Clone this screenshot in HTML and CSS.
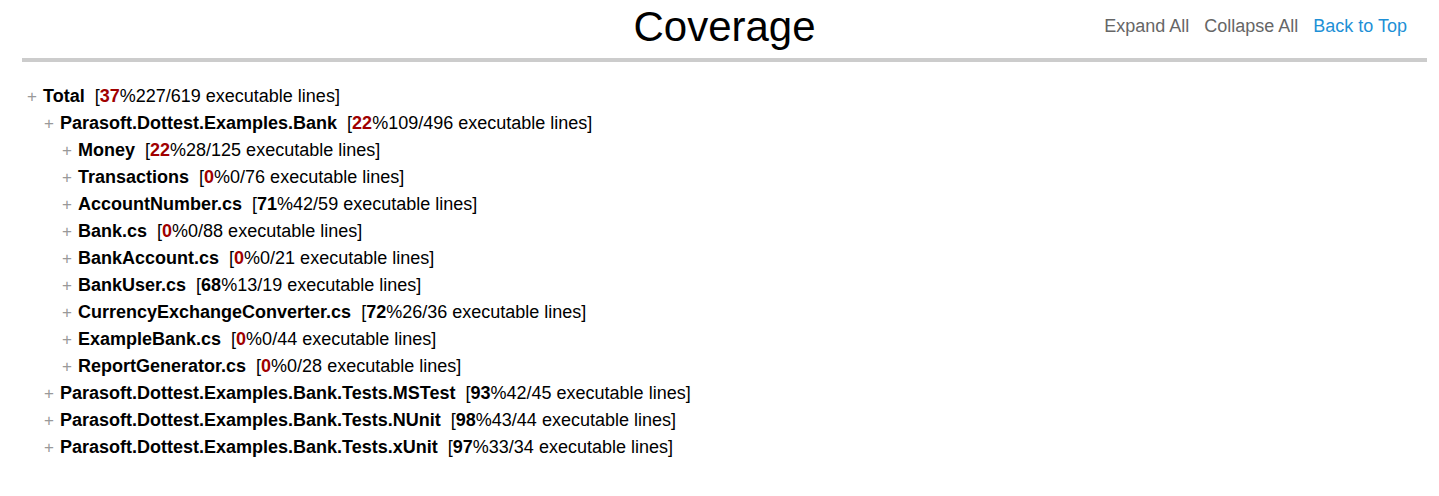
FILE: index.html
```html
<!DOCTYPE html>
<html>
<head>
<meta charset="utf-8">
<link rel="stylesheet" href="styles.css">
</head>
<body>
<div class="page">
  <header class="header">
    <h1 class="title">Coverage</h1>
    <nav class="links">
      <a class="link">Expand All</a>
      <a class="link">Collapse All</a>
      <a class="link top">Back to Top</a>
    </nav>
  </header>
  <ul class="tree">
    <li class="node l1"><span class="plus">+</span><b class="name">Total</b><span class="stat">[<b class="low">37</b>%227/619 executable lines]</span></li>
    <li class="node l2"><span class="plus">+</span><b class="name">Parasoft.Dottest.Examples.Bank</b><span class="stat">[<b class="low">22</b>%109/496 executable lines]</span></li>
    <li class="node l3"><span class="plus">+</span><b class="name">Money</b><span class="stat">[<b class="low">22</b>%28/125 executable lines]</span></li>
    <li class="node l3"><span class="plus">+</span><b class="name">Transactions</b><span class="stat">[<b class="low">0</b>%0/76 executable lines]</span></li>
    <li class="node l3"><span class="plus">+</span><b class="name">AccountNumber.cs</b><span class="stat">[<b>71</b>%42/59 executable lines]</span></li>
    <li class="node l3"><span class="plus">+</span><b class="name">Bank.cs</b><span class="stat">[<b class="low">0</b>%0/88 executable lines]</span></li>
    <li class="node l3"><span class="plus">+</span><b class="name">BankAccount.cs</b><span class="stat">[<b class="low">0</b>%0/21 executable lines]</span></li>
    <li class="node l3"><span class="plus">+</span><b class="name">BankUser.cs</b><span class="stat">[<b>68</b>%13/19 executable lines]</span></li>
    <li class="node l3"><span class="plus">+</span><b class="name">CurrencyExchangeConverter.cs</b><span class="stat">[<b>72</b>%26/36 executable lines]</span></li>
    <li class="node l3"><span class="plus">+</span><b class="name">ExampleBank.cs</b><span class="stat">[<b class="low">0</b>%0/44 executable lines]</span></li>
    <li class="node l3"><span class="plus">+</span><b class="name">ReportGenerator.cs</b><span class="stat">[<b class="low">0</b>%0/28 executable lines]</span></li>
    <li class="node l2"><span class="plus">+</span><b class="name">Parasoft.Dottest.Examples.Bank.Tests.MSTest</b><span class="stat">[<b>93</b>%42/45 executable lines]</span></li>
    <li class="node l2"><span class="plus">+</span><b class="name">Parasoft.Dottest.Examples.Bank.Tests.NUnit</b><span class="stat">[<b>98</b>%43/44 executable lines]</span></li>
    <li class="node l2"><span class="plus">+</span><b class="name">Parasoft.Dottest.Examples.Bank.Tests.xUnit</b><span class="stat">[<b>97</b>%33/34 executable lines]</span></li>
  </ul>
</div>
</body>
</html>
```

FILE: styles.css
```css
html, body {
  margin: 0;
  padding: 0;
  background: #fff;
}
body {
  font-family: "Liberation Sans", Arial, sans-serif;
  color: #000;
}
.page {
  margin: 0 12px 0 22px;
}
.header {
  position: relative;
  height: 58px;
  border-bottom: 4px solid #cccccc;
}
.title {
  margin: 0;
  padding-top: 3px;
  text-align: center;
  font-size: 42px;
  font-weight: normal;
  line-height: 48px;
}
.links {
  position: absolute;
  right: 20px;
  top: 15px;
  display: flex;
  gap: 15px;
  font-size: 18px;
  line-height: 22px;
}
.link {
  color: #666666;
  cursor: pointer;
}
.link.top {
  color: #1e90d6;
}
.tree {
  list-style: none;
  margin: 0;
  padding: 21px 0 0 0;
}
.node {
  display: flex;
  align-items: baseline;
  font-size: 18px;
  line-height: 27px;
  white-space: nowrap;
}
.l1 { padding-left: 5px; }
.l2 { padding-left: 22px; }
.l3 { padding-left: 40px; }
.plus {
  color: #999999;
  font-size: 17px;
  width: 16px;
}
.name {
  font-weight: bold;
  margin-right: 10px;
}
.stat b {
  font-weight: bold;
  color: #000;
}
.stat b.low {
  color: #a00000;
}
```
